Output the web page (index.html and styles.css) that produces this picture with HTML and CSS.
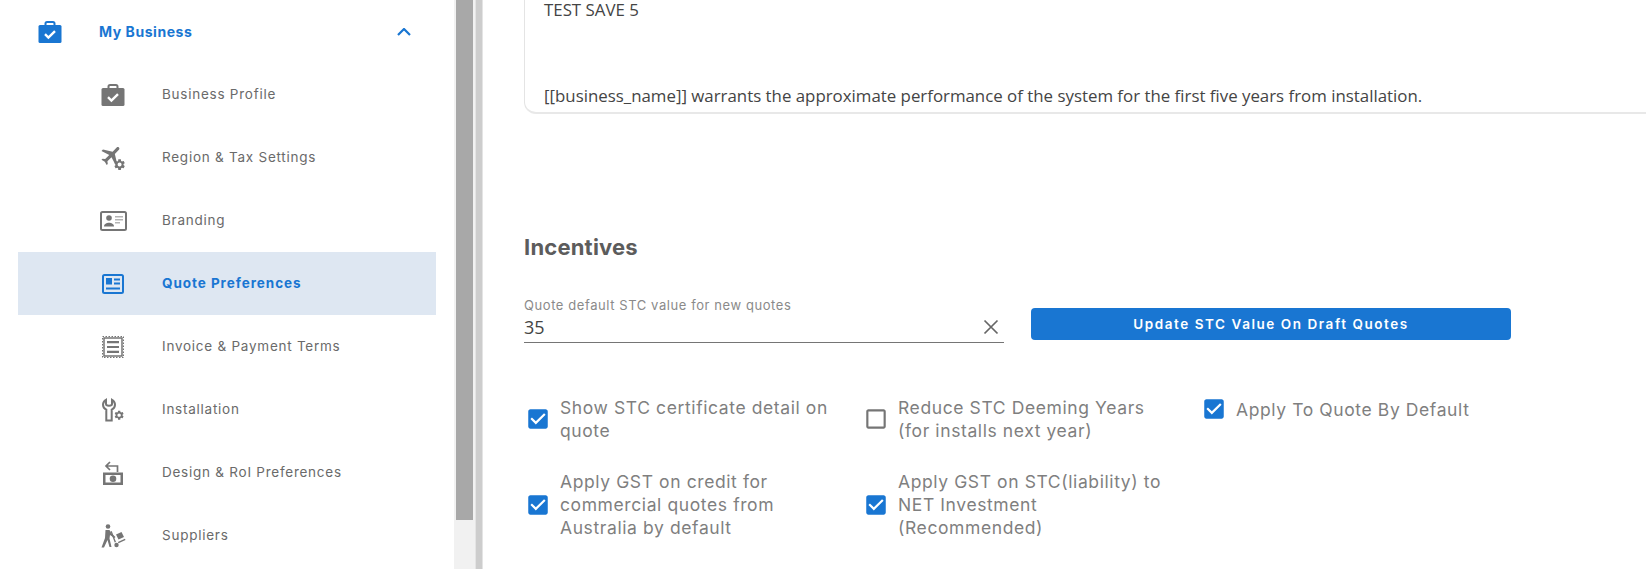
FILE: index.html
```html
<!DOCTYPE html>
<html lang="en">
<head>
  <meta charset="UTF-8">
  <title>Quote Preferences</title>
  <link rel="stylesheet" href="styles.css">
</head>
<body>

<svg class="defs" width="0" height="0">
  <defs>
    <path id="gear" d="M19.14 12.94c.04-.3.06-.61.06-.94 0-.32-.02-.64-.07-.94l2.03-1.58c.18-.14.23-.41.12-.61l-1.92-3.32c-.12-.22-.37-.29-.59-.22l-2.39.96c-.5-.38-1.03-.7-1.62-.94l-.36-2.54c-.04-.24-.24-.41-.48-.41h-3.84c-.24 0-.43.17-.47.41l-.36 2.54c-.59.24-1.13.57-1.62.94l-2.39-.96c-.22-.08-.47 0-.59.22L2.74 8.87c-.12.21-.08.47.12.61l2.03 1.58c-.05.3-.09.63-.09.94s.02.64.07.94l-2.03 1.58c-.18.14-.23.41-.12.61l1.92 3.32c.12.22.37.29.59.22l2.39-.96c.5.38 1.03.7 1.62.94l.36 2.54c.05.24.24.41.48.41h3.84c.24 0 .44-.17.47-.41l.36-2.54c.59-.24 1.13-.56 1.62-.94l2.39.96c.22.08.47 0 .59-.22l1.92-3.32c.12-.22.07-.47-.12-.61l-2.01-1.58zM12 15.6c-1.98 0-3.6-1.62-3.6-3.6s1.62-3.6 3.6-3.6 3.6 1.62 3.6 3.6-1.62 3.6-3.6 3.6z"/>
    <g id="case">
      <path d="M7.5 6V3.6A1.6 1.6 0 0 1 9.1 2h5.8a1.6 1.6 0 0 1 1.6 1.6V6" fill="none" stroke="currentColor" stroke-width="2"/>
      <rect x="0.5" y="5" width="23" height="18" rx="1.5" fill="currentColor"/>
      <path d="M7 14.2l3.4 3.3 6.6-6.4" fill="none" stroke="#fff" stroke-width="2.4"/>
    </g>
    <path id="box-on" d="M19 3H5c-1.11 0-2 .9-2 2v14c0 1.1.89 2 2 2h14c1.11 0 2-.9 2-2V5c0-1.1-.89-2-2-2zm-9 14l-5-5 1.41-1.41L10 14.17l7.59-7.59L19 8l-9 9z"/>
    <path id="box-off" d="M19 5v14H5V5h14m0-2H5c-1.1 0-2 .9-2 2v14c0 1.1.9 2 2 2h14c1.1 0 2-.9 2-2V5c0-1.1-.9-2-2-2z"/>
  </defs>
</svg>

<div class="page">
  <!-- Side menu -->
  <nav class="sidebar">
    <div class="menu-head">
      <svg class="head-icon" viewBox="0 0 24 24"><use href="#case"/></svg>
      <span>My Business</span>
      <svg class="chevron" viewBox="0 0 14 8"><path d="M1 7l6-6 6 6" fill="none" stroke="currentColor" stroke-width="2.2"/></svg>
    </div>

    <a class="menu-item">
      <span class="icon-slot"><svg width="24" height="24" viewBox="0 0 24 24"><use href="#case"/></svg></span>
      <span class="item-label">Business Profile</span>
    </a>
    <a class="menu-item">
      <span class="icon-slot">
        <svg width="26" height="26" viewBox="0 0 26 26" fill="currentColor">
          <path transform="translate(11.5 10) rotate(45) scale(1.05) translate(-11.5 -12)" d="M21 16v-2l-8-5V3.5c0-.83-.67-1.5-1.5-1.5S10 2.67 10 3.5V9l-8 5v2l8-2.500V19l-2 1.500V22l3.500-1 3.500 1v-1.500L13 19v-5.500l8 2.500z"/>
          <use href="#gear" transform="translate(13 13) scale(0.55)"/>
        </svg>
      </span>
      <span class="item-label">Region &amp; Tax Settings</span>
    </a>
    <a class="menu-item">
      <span class="icon-slot">
        <svg width="27" height="20" viewBox="0 0 27 20" fill="currentColor">
          <rect x="1" y="1" width="25" height="18" rx="1.5" fill="none" stroke="currentColor" stroke-width="2"/>
          <circle cx="9" cy="7" r="2.8"/>
          <path d="M4 15.5c0-2.6 2.6-3.7 5-3.7s5 1.1 5 3.7z"/>
          <path d="M15 5h8v1.5h-8zM15 8h8v1.5h-8zM15 11h5v1.5h-5z" opacity="0.55"/>
        </svg>
      </span>
      <span class="item-label">Branding</span>
    </a>
    <a class="menu-item active">
      <span class="icon-slot">
        <svg width="22" height="20" viewBox="0 0 22 20" fill="currentColor">
          <rect x="1" y="1" width="20" height="18" rx="1.5" fill="none" stroke="currentColor" stroke-width="2"/>
          <path d="M4 4h6v6.5H4zM12 4.5h6v2h-6zM12 8.500h6v2h-6zM4 13.500h14v2H4z"/>
        </svg>
      </span>
      <span class="item-label">Quote Preferences</span>
    </a>
    <a class="menu-item">
      <span class="icon-slot">
        <svg width="22" height="22" viewBox="0 0 22 22" fill="currentColor">
          <rect x="2" y="2" width="18" height="18" fill="none" stroke="currentColor" stroke-width="1.500"/>
          <rect x="0.500" y="0.500" width="21" height="21" fill="none" stroke="currentColor" stroke-width="1" stroke-dasharray="1.500 1.500"/>
          <path d="M5 5h12v2.200H5zM5 9.900h12v2.200H5zM5 14.800h12V17H5z"/>
        </svg>
      </span>
      <span class="item-label">Invoice &amp; Payment Terms</span>
    </a>
    <a class="menu-item">
      <span class="icon-slot">
        <svg width="24" height="24" viewBox="0 0 24 24" fill="currentColor">
          <path d="M5 1.800C2.800 3 2 5 2 6.800c0 2.300 1.300 3.900 3.300 4.800V22.500h5.400V11.600c2-.9 3.300-2.500 3.300-4.800 0-1.800-.8-3.800-3-5V6c0 1-1 1.800-3 1.800S5 7 5 6z" fill="none" stroke="currentColor" stroke-width="2"/>
          <use href="#gear" transform="translate(12.500 11.500) scale(0.47)"/>
        </svg>
      </span>
      <span class="item-label">Installation</span>
    </a>
    <a class="menu-item">
      <span class="icon-slot">
        <svg width="22" height="24" viewBox="0 0 22 24" fill="currentColor">
          <path d="M8 1L4 5l4 4M4 5h11.500v6" fill="none" stroke="currentColor" stroke-width="1.700"/>
          <path fill-rule="evenodd" d="M1 11.500h20V24H1zM3.500 14v7.500h15V14z"/>
          <circle cx="11" cy="17.700" r="3.300"/>
        </svg>
      </span>
      <span class="item-label">Design &amp; RoI Preferences</span>
    </a>
    <a class="menu-item">
      <span class="icon-slot">
        <svg width="25" height="24" viewBox="0 0 25 24" fill="currentColor">
          <circle cx="7" cy="2.500" r="2.300"/>
          <path d="M4.500 6h4l2 3.500 4 3.500-1 1-4.500-3-.5 3.500 2 8.500H8.500L6.500 16 3 23.500H0.500L4 14z"/>
          <path d="M15 10.500l5.500-2.500 2.500 5-5.500 2.500z"/>
          <path d="M24.500 16l-7 3.300-.6-1.300 7-3.300z"/>
          <circle cx="15.500" cy="21" r="2.200"/>
          <path d="M9.500 7.500l1.200-.6 4.300 11-1.300.6z"/>
        </svg>
      </span>
      <span class="item-label">Suppliers</span>
    </a>
  </nav>

  <div class="scroll-track"><div class="scroll-thumb"></div></div>
  <div class="divider"></div>

  <!-- Settings panel -->
  <main class="content">
    <div class="editor">
      <p class="editor-top">TEST SAVE 5</p>
      <p>[[business_name]] warrants the approximate performance of the system for the first five years from installation.</p>
    </div>

    <h2 class="section-title">Incentives</h2>

    <div class="stc-row">
      <div class="field">
        <label class="field-label">Quote default STC value for new quotes</label>
        <div class="field-input">
          <span>35</span>
          <svg class="clear" viewBox="0 0 16 16"><path d="M1.500 1.500l13 13M14.500 1.500l-13 13" fill="none" stroke="currentColor" stroke-width="1.700"/></svg>
        </div>
      </div>
      <button class="button">Update STC Value On Draft Quotes</button>
    </div>

    <div class="options">
      <div class="option">
        <svg class="check on" viewBox="0 0 24 24"><use href="#box-on"/></svg>
        <span>Show STC certificate detail on<br>quote</span>
      </div>
      <div class="option">
        <svg class="check" viewBox="0 0 24 24"><use href="#box-off"/></svg>
        <span>Reduce STC Deeming Years<br>(for installs next year)</span>
      </div>
      <div class="option">
        <svg class="check on" viewBox="0 0 24 24"><use href="#box-on"/></svg>
        <span>Apply To Quote By Default</span>
      </div>
      <div class="option">
        <svg class="check on" viewBox="0 0 24 24"><use href="#box-on"/></svg>
        <span>Apply GST on credit for<br>commercial quotes from<br>Australia by default</span>
      </div>
      <div class="option">
        <svg class="check on" viewBox="0 0 24 24"><use href="#box-on"/></svg>
        <span>Apply GST on STC(liability) to<br>NET Investment<br>(Recommended)</span>
      </div>
    </div>
  </main>
</div>

</body>
</html>
```

FILE: styles.css
```css
body {
  margin: 0;
  height: 569px;
  overflow: hidden;
  background: white;
  font-family: Inter, "Open Sans", sans-serif;
  color: #666;
}

.defs {
  position: absolute;
}

.page {
  display: flex;
  height: 569px;
}

/* side menu */
.sidebar {
  width: 418px;
  margin-left: 18px;
  margin-right: 18px;
  flex-shrink: 0;
}

.menu-head {
  height: 63px;
  display: flex;
  align-items: center;
  color: #1976d2;
  font-size: 14px;
  font-weight: 700;
  letter-spacing: 0.55px;
}

.head-icon {
  width: 24px;
  height: 24px;
  margin-left: 20px;
  margin-right: 37px;
}

.chevron {
  width: 14px;
  height: 8px;
  margin-left: auto;
  margin-right: 25px;
}

.menu-item {
  height: 63px;
  display: flex;
  align-items: center;
  font-size: 13.500px;
  letter-spacing: 0.75px;
  color: #6a6a6a;
}

.item-label {
  margin-top: -1px;
}

.icon-slot {
  width: 28px;
  margin-left: 81px;
  margin-right: 35px;
  display: flex;
  justify-content: center;
  color: #757575;
}

.menu-item.active {
  background: #dee7f2;
  color: #1976d2;
  font-weight: 700;
  letter-spacing: 0.95px;
}

.active .icon-slot {
  color: #1976d2;
}

/* scroll bars */
.scroll-track {
  width: 21px;
  background: #f1f1f1;
  flex-shrink: 0;
  padding-left: 2px;
  box-sizing: border-box;
}

.scroll-thumb {
  width: 17px;
  height: 520px;
  background: #a8a8a8;
}

.divider {
  width: 8px;
  background: #cdcdcd;
  border-left: 1px solid #e4e4e4;
  border-right: 1px solid #e4e4e4;
  box-sizing: border-box;
  flex-shrink: 0;
}

/* settings panel */
.content {
  flex: 1;
  overflow: hidden;
  padding-left: 41px;
}

.editor {
  height: 114px;
  box-sizing: border-box;
  margin-right: -20px;
  padding-left: 19px;
  border-left: 1px solid #e4e4e4;
  border-bottom: 2px solid #e8e8e8;
  border-bottom-left-radius: 12px;
  font-family: "Open Sans", sans-serif;
  font-size: 16.850px;
  line-height: 22px;
  color: #444;
}

.editor p {
  margin: 0;
}

.editor .editor-top {
  height: 85px;
  line-height: 19px;
}

.section-title {
  margin: 120px 0 0;
  font-size: 22px;
  line-height: 26px;
  font-weight: 700;
  letter-spacing: 0.2px;
  color: #5c5c5c;
}

.stc-row {
  display: flex;
  align-items: flex-start;
  gap: 27px;
  margin-top: 37px;
}

.field {
  width: 480px;
}

.field-label {
  display: block;
  font-size: 13px;
  line-height: 16px;
  letter-spacing: 0.58px;
  color: #8a8a8a;
}

.field-input {
  display: flex;
  align-items: center;
  justify-content: space-between;
  height: 27px;
  padding-right: 5px;
  padding-bottom: 2px;
  border-bottom: 1px solid #757575;
  font-family: "Open Sans", sans-serif;
  font-size: 18px;
  color: #444;
}

.clear {
  width: 16px;
  height: 16px;
  color: #666;
}

.button {
  width: 480px;
  height: 32px;
  margin-top: 11px;
  background: #1976d2;
  color: white;
  font-family: Inter, sans-serif;
  font-size: 13.500px;
  font-weight: 600;
  letter-spacing: 1.55px;
  border: none;
  border-radius: 4px;
}

.options {
  display: grid;
  grid-template-columns: repeat(3, 338px);
  row-gap: 28px;
  margin-top: 53px;
  align-items: start;
}

.option {
  display: flex;
  align-items: center;
  gap: 9px;
  font-size: 17.500px;
  line-height: 23px;
  letter-spacing: 0.6px;
  color: #7f7f7f;
}

.check {
  width: 26px;
  height: 26px;
  margin-left: 1px;
  flex-shrink: 0;
  fill: #757575;
}

.check.on {
  fill: #1976d2;
}
```
